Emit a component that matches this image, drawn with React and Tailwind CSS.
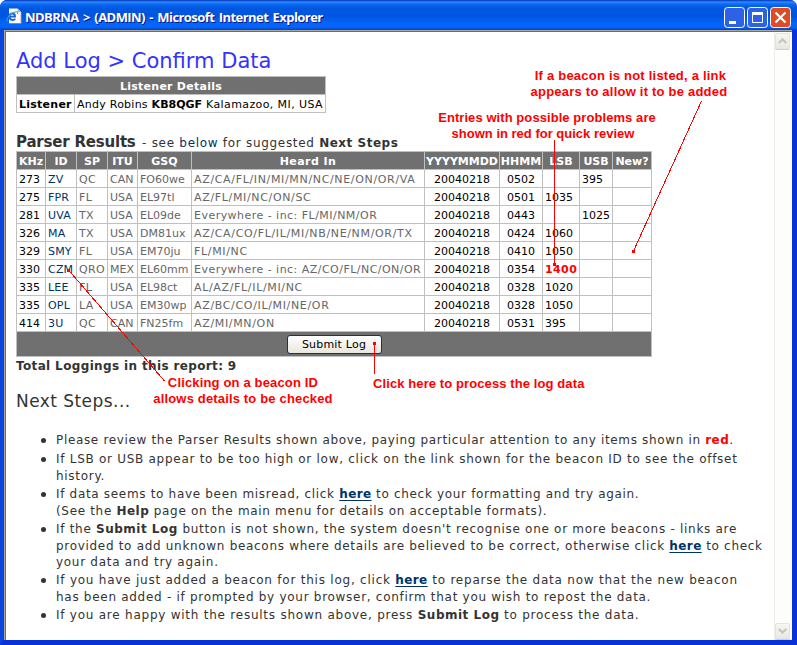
import React from "react";

const rows = [
  ["273", "ZV", "QC", "CAN", "FO60we", "AZ/CA/FL/IN/MI/MN/NC/NE/ON/OR/VA", "20040218", "0502", "", "395"],
  ["275", "FPR", "FL", "USA", "EL97tl", "AZ/FL/MI/NC/ON/SC", "20040218", "0501", "1035", ""],
  ["281", "UVA", "TX", "USA", "EL09de", "Everywhere - inc: FL/MI/NM/OR", "20040218", "0443", "", "1025"],
  ["326", "MA", "TX", "USA", "DM81ux", "AZ/CA/CO/FL/IL/MI/NB/NE/NM/OR/TX", "20040218", "0424", "1060", ""],
  ["329", "SMY", "FL", "USA", "EM70ju", "FL/MI/NC", "20040218", "0410", "1050", ""],
  ["330", "CZM", "QRO", "MEX", "EL60mm", "Everywhere - inc: AZ/CO/FL/NC/ON/OR", "20040218", "0354", "1400", ""],
  ["335", "LEE", "FL", "USA", "EL98ct", "AL/AZ/FL/IL/MI/NC", "20040218", "0328", "1020", ""],
  ["335", "OPL", "LA", "USA", "EM30wp", "AZ/BC/CO/IL/MI/NE/OR", "20040218", "0328", "1050", ""],
  ["414", "3U", "QC", "CAN", "FN25fm", "AZ/MI/MN/ON", "20040218", "0531", "395", ""],
];
const heads = ["KHz", "ID", "SP", "ITU", "GSQ", "Heard In", "YYYYMMDD", "HHMM", "LSB", "USB", "New?"];
const cols = "grid grid-cols-[28px_30px_30px_29px_53px_232px_74px_42px_36px_32px_38px] gap-px";

function cellStyle(i, value) {
  if (value === "1400") return "text-[#ff0000] font-bold tracking-[0.4px]";
  if (i === 1) return "text-[#003366] tracking-[0.2px]";
  if (i === 2) return "text-[#666666] tracking-[0.4px]";
  if (i === 5) return "text-[#666666] " + (value.startsWith("Every") ? "tracking-[0.47px]" : "tracking-[0.66px]");
  if (i >= 3 && i <= 4) return "text-[#666666]";
  return "text-black";
}

function Line({ children, className = "" }) {
  return <div className={"h-[17px] whitespace-nowrap " + className}>{children}</div>;
}

function Here() {
  return <a className="font-bold tracking-[0.4px] text-[#003366] underline decoration-1 underline-offset-2">here</a>;
}

function B({ children, className = "" }) {
  return <b className={"tracking-[0.5px] " + className}>{children}</b>;
}

function Item({ children, className = "mb-px" }) {
  return (
    <li className={"flex " + className}>
      <span className="mt-[6px] mr-[10px] ml-[25px] h-[5px] w-[5px] shrink-0 rounded-full bg-[#333333]" />
      <div>{children}</div>
    </li>
  );
}

function ScrollButton({ down }) {
  return (
    <div className="flex h-4 w-[15px] items-center justify-center rounded-[2px] border border-[#e6e4dc] bg-linear-to-b from-[#f7f7f3] to-[#e9e8e0] shadow-[0_1px_0_#d2cfc0]">
      <svg width="9" height="6" viewBox="0 0 9 6" className={down ? "rotate-180" : ""}>
        <path d="M0.7 5 L4.5 1.4 L8.3 5" fill="none" stroke="#c5c3ba" strokeWidth="2" />
      </svg>
    </div>
  );
}

function TitleBar() {
  return (
    <header className="flex h-[30px] shrink-0 items-center bg-[linear-gradient(to_bottom,#0831b8_0,#2b8bff_2px,#0c6cf4_4px,#0257e0_8px,#0055e0_16px,#0464fa_23px,#0466ff_27px,#0243c0_30px)] pt-1 pr-[6px] pl-[6px]">
      <svg width="16" height="16" viewBox="0 0 16 16" className="mr-[3px] mb-[2px] shrink-0">
        <path d="M3 0.5 H11.5 L15 4 V15.5 H3 Z" fill="#fbfaf3" />
        <path d="M3 15.5 H15.2 V4" fill="none" stroke="#8f8a78" />
        <path d="M11.5 0.5 V4 H15 Z" fill="#b9b5a3" />
        <path d="M3.6 8.6 H9 C8.9 4.6 3.6 4.4 3.4 8.6 C3.3 12.6 8 12.8 9.1 10.6" fill="none" stroke="#1b63cf" strokeWidth="1.9" />
        <path d="M1.2 13.6 C-0.4 11.6 4 4.6 10.6 3.8 C12 3.7 12 4.8 11.4 6" fill="none" stroke="#3f9bf0" strokeWidth="1.1" />
      </svg>
      <h1 className="grow pt-px font-['Open_Sans',sans-serif] text-[13px] font-bold tracking-[-0.55px] whitespace-nowrap text-white [text-shadow:1px_1px_0_#0a1883] [word-spacing:1.5px]">
        NDBRNA &gt; (ADMIN) - Microsoft Internet Explorer
      </h1>
      <div className="flex gap-[2px]">
        <svg width="21" height="21" viewBox="0 0 21 21">
          <rect x="0.5" y="0.5" width="20" height="20" rx="3" fill="#2e62e6" stroke="#fff" />
          <rect x="5" y="14" width="7" height="3" fill="#fff" />
        </svg>
        <svg width="21" height="21" viewBox="0 0 21 21">
          <rect x="0.5" y="0.5" width="20" height="20" rx="3" fill="#2e62e6" stroke="#fff" />
          <path d="M5.5 5 V15.5 H15.5 V5" fill="none" stroke="#fff" />
          <rect x="5" y="5" width="11" height="3" fill="#fff" />
        </svg>
        <svg width="21" height="21" viewBox="0 0 21 21">
          <rect x="0.5" y="0.5" width="20" height="20" rx="3" fill="#df4b25" stroke="#fff" />
          <path d="M5.5 5.5 L15.5 15.5 M15.5 5.5 L5.5 15.5" stroke="#fff" strokeWidth="2.2" />
        </svg>
      </div>
    </header>
  );
}

function Annotations() {
  return (
    <div className="pointer-events-none absolute inset-0 text-center font-['Liberation_Sans',Arial,sans-serif] text-[13px] leading-4 font-bold whitespace-nowrap text-[#ff0000]">
      <svg width="797" height="645" viewBox="0 0 797 645" className="absolute inset-0" stroke="#ff0000" fill="#ff0000" shapeRendering="crispEdges">
        <path d="M701.5 101 L633.5 251 M554.5 140 V265 M374.5 344 V374 M68.5 270 L164.5 381" fill="none" />
        <path d="M632 250 h3 v3 h-3 Z M553 263 h3 v3 h-3 Z M373 342 h3 v3 h-3 Z M67 269 h3 v3 h-3 Z" stroke="none" />
      </svg>
      <div className="absolute top-[68px] left-[530px] w-[198px] tracking-[0.22px]"><span className="pl-[3px]">If a beacon is not listed, a link</span><br />appears to allow it to be added</div>
      <div className="absolute top-[110px] left-[437px] w-[220px] tracking-[0.07px]">Entries with possible problems are<br /><span className="pr-2 tracking-[0px]">shown in red for quick review</span></div>
      <div className="absolute top-[375px] left-[152px] w-[182px] tracking-[0.16px]">Clicking on a beacon ID<br />allows details to be checked</div>
      <div className="absolute top-[376px] left-[373px] tracking-[0.1px]">Click here to process the log data</div>
    </div>
  );
}

export default function App() {
  return (
    <div className="relative flex h-[645px] w-[797px] flex-col overflow-hidden rounded-t-[7px] bg-[#0831d9] font-['DejaVu_Sans',Verdana,sans-serif]">
      <TitleBar />
      <div className="flex grow border-r-[5px] border-b-[5px] border-l-[4px] border-r-[#0831d9] border-b-[#0831d9] border-l-[#0a45e0]">
        <div className="flex grow border-t border-l border-[#aca899]">
          <div className="flex grow border-t border-l border-[#716f64] bg-white">
            <main className="w-[768px] shrink-0 pl-[10px] text-[12px] text-[#333333]">
              <h2 className="mt-[14px] h-[30px] text-[21px] leading-[31px] whitespace-nowrap text-[#3333ff]">Add Log &gt; Confirm Data</h2>
              <section className="grid w-[310px] grid-cols-[57px_250px] gap-px bg-[#c0c0c0] p-px text-[11px] leading-[19px] whitespace-nowrap text-black">
                <div className="col-span-2 h-[17px] bg-[#707070] text-center font-bold tracking-[0.25px] text-white">Listener Details</div>
                <div className="h-[17px] bg-white pl-[2px] font-bold tracking-[0.25px]">Listener</div>
                <div className="h-[17px] bg-white pl-[2px]">
                  <span className="tracking-[0.25px]">Andy Robins </span><b>KB8QGF</b><span className="tracking-[0.4px]"> Kalamazoo, MI, USA</span>
                </div>
              </section>
              <h3 className="mt-[19px] h-[19px] text-[12px] leading-5 tracking-[0.7px] whitespace-nowrap">
                <span className="mr-[2px] text-[15px] font-bold tracking-[-0.2px]">Parser Results</span> - see <a className="text-[#003366]">below</a> for suggested <B>Next Steps</B>
              </h3>
              <section className="flex w-[636px] flex-col gap-px bg-[#c0c0c0] p-px text-[11px] leading-[19px] whitespace-nowrap">
                <div className={cols}>
                  {heads.map((h) => (
                    <div key={h} className={"h-[17px] bg-[#707070] text-center font-bold text-white " + (h === "Heard In" ? "tracking-[0.45px]" : "")}>{h}</div>
                  ))}
                </div>
                {rows.map((r, n) => (
                  <div key={n} className={cols}>
                    {[...r, ""].map((v, i) => (
                      <div key={i} className={"h-[17px] bg-white " + (i === 6 || i === 7 ? "text-center " : "pl-[2px] ") + cellStyle(i, v)}>{v}</div>
                    ))}
                  </div>
                ))}
                <div className="flex h-6 items-center justify-center bg-[#707070]">
                  <button className="h-[19px] w-[95px] rounded-[3px] border border-[#003c74] bg-linear-to-b from-white to-[#e8e6dc] text-[11px] leading-[18px] tracking-[0.2px] text-black">Submit Log</button>
                </div>
              </section>
              <p className="h-[18px] leading-[18px] font-bold tracking-[0.36px] whitespace-nowrap">Total Loggings in this report: 9</p>
              <h3 className="mt-[15px] h-[23px] text-[17px] leading-[22px] tracking-[0.45px]">Next Steps...</h3>
              <ul className="mt-[19px] text-[12px] leading-[17px] tracking-[0.71px]">
                <Item className="mb-[2px]"><Line className="tracking-[0.66px]">Please review the Parser Results shown above, paying particular attention to any items shown in <B className="text-[#ff0000]">red</B>.</Line></Item>
                <Item>
                  <Line className="tracking-[0.72px]">If LSB or USB appear to be too high or low, click on the link shown for the beacon ID to see the offset</Line>
                  <Line>history.</Line>
                </Item>
                <Item>
                  <Line className="tracking-[0.68px]">If data seems to have been misread, click <Here /> to check your formatting and try again.</Line>
                  <Line className="tracking-[0.67px]">(See the <B>Help</B> page on the main menu for details on acceptable formats).</Line>
                </Item>
                <Item>
                  <Line>If the <B>Submit Log</B> button is not shown, the system doesn't recognise one or more beacons - links are</Line>
                  <Line className="-mb-px tracking-[0.69px]">provided to add unknown beacons where details are believed to be correct, otherwise click <Here /> to check</Line>
                  <Line>your data and try again.</Line>
                </Item>
                <Item>
                  <Line className="tracking-[0.77px]">If you have just added a beacon for this log, click <Here /> to reparse the data now that the new beacon</Line>
                  <Line>has been added - if prompted by your browser, confirm that you wish to repost the data.</Line>
                </Item>
                <Item><Line className="tracking-[0.76px]">If you are happy with the results shown above, press <B>Submit Log</B> to process the data.</Line></Item>
              </ul>
            </main>
            <aside className="flex grow flex-col justify-between border-b border-l border-[#eeede5] bg-[#fdfdfb] pt-px">
              <ScrollButton />
              <ScrollButton down />
            </aside>
          </div>
        </div>
      </div>
      <Annotations />
    </div>
  );
}
